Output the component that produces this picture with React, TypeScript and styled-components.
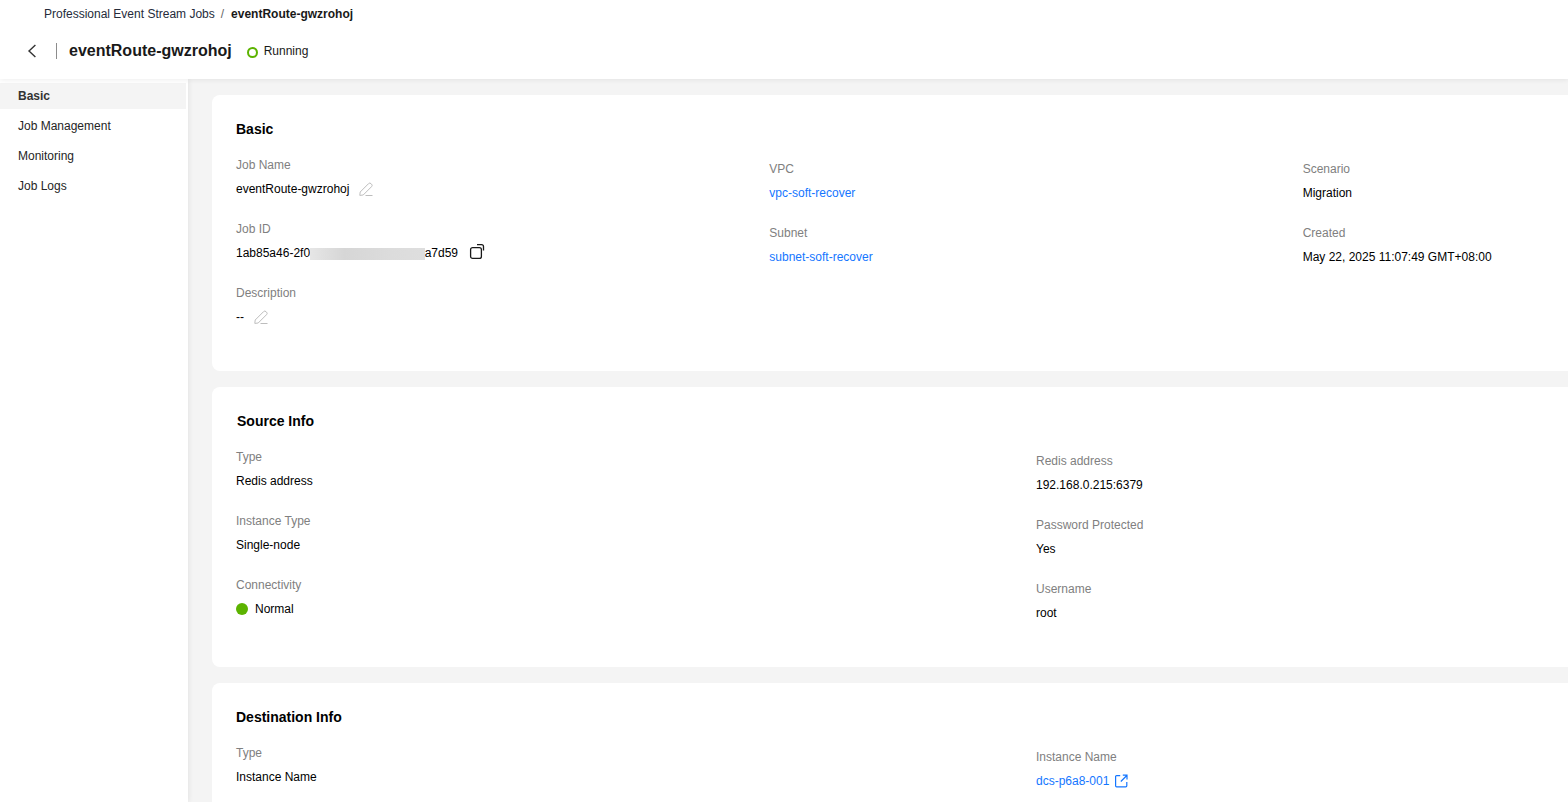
import React from "react";
import styled, { createGlobalStyle } from "styled-components";

const Global = createGlobalStyle`
  html, body { margin: 0; padding: 0; height: 100%; overflow: hidden; }
  body { font-family: "Liberation Sans", Arial, sans-serif; font-size: 12px; color: #000; background: #fff; }
  #root { height: 100%; }
`;

const Page = styled.div`
  width: 1568px;
  height: 802px;
  display: flex;
  flex-direction: column;
  overflow: hidden;
`;
const Header = styled.header`
  height: 79px;
  flex: none;
  background: #fff;
  box-shadow: 0 1px 5px rgba(0, 0, 0, 0.07);
  position: relative;
  z-index: 2;
`;
const Crumbs = styled.nav`
  height: 28px;
  padding-left: 44px;
  display: flex;
  align-items: center;
  color: #252b3a;
`;
const CrumbCurrent = styled.span`
  font-weight: 700;
  color: #191919;
`;
const CrumbSep = styled.span`
  color: #666;
  margin: 0 7px 0 6px;
`;
const TitleRow = styled.div`
  height: 46px;
  display: flex;
  align-items: center;
  padding-left: 26px;
`;
const BackIcon = styled.svg`
  width: 14px;
  height: 16px;
  flex: none;
`;
const Divider = styled.span`
  width: 1px;
  height: 16px;
  background: #8c8c8c;
  margin: 0 12px 0 16px;
`;
const JobTitle = styled.h1`
  margin: 0;
  font-size: 16px;
  line-height: 24px;
  font-weight: 700;
  color: #191919;
`;
const StatusRing = styled.span`
  width: 11px;
  height: 11px;
  box-sizing: border-box;
  border: 2.5px solid #5cb300;
  border-radius: 50%;
  margin: 2px 6px 0 15px;
`;
const StatusText = styled.span`
  color: #191919;
`;
const Body = styled.div`
  flex: 1;
  display: flex;
  min-height: 0;
`;
const Sidebar = styled.aside`
  width: 188px;
  flex: none;
  background: #fff;
  padding-top: 4px;
  box-shadow: 1px 0 5px rgba(0, 0, 0, 0.07);
  position: relative;
  z-index: 1;
`;
const NavItem = styled.div<{ $active?: boolean }>`
  height: 26px;
  width: 186px;
  margin-bottom: 4px;
  padding-left: 18px;
  box-sizing: border-box;
  display: flex;
  align-items: center;
  font-weight: ${(p) => (p.$active ? 700 : 400)};
  background: ${(p) => (p.$active ? "#f4f4f4" : "transparent")};
  color: ${(p) => (p.$active ? "#333" : "#252525")};
`;
const Main = styled.main`
  flex: 1;
  min-width: 0;
  background: #f4f4f4;
  padding: 16px 0 0 24px;
  overflow: hidden;
  display: flex;
  flex-direction: column;
  gap: 16px;
`;
const Card = styled.section`
  flex: none;
  width: 1650px;
  background: #fff;
  border-radius: 8px;
  padding: 24px 24px 46px;
  box-sizing: border-box;
`;
const CardTitle = styled.h2<{ $indent?: number }>`
  margin: 0 0 18px;
  padding-left: ${(p) => p.$indent ?? 0}px;
  font-size: 14px;
  line-height: 20px;
  font-weight: 700;
  color: #000;
`;
const Columns = styled.div<{ $count: number }>`
  display: grid;
  width: 1600px;
  grid-template-columns: repeat(${(p) => p.$count}, 1fr);
`;
const Column = styled.div<{ $offset?: boolean }>`
  display: flex;
  flex-direction: column;
  gap: 24px;
  padding-top: ${(p) => (p.$offset ? "4px" : "0")};
`;
const Field = styled.div`
  display: flex;
  flex-direction: column;
  gap: 8px;
`;
const Label = styled.div`
  line-height: 16px;
  color: #808080;
`;
const Value = styled.div`
  line-height: 16px;
  color: #000;
  display: flex;
  align-items: center;
`;
const LinkText = styled.span`
  color: #1476ff;
`;
const EditIcon = styled.svg`
  width: 15px;
  height: 16px;
  margin-left: 9.5px;
  flex: none;
`;
const Masked = styled.span`
  display: inline-block;
  width: 114.6px;
  height: 12px;
  margin-top: 1px;
  background: linear-gradient(90deg, #e6e6e6, #d6d6d6 30%, #dcdcdc 70%, #dedede);
  filter: blur(0.6px);
`;
const CopyIcon = styled.svg`
  width: 16px;
  height: 16px;
  margin-left: 11px;
  flex: none;
  overflow: visible;
`;
const OpenIcon = styled.svg`
  width: 14px;
  height: 14px;
  margin-left: 5px;
  flex: none;
`;
const Dot = styled.span`
  width: 12px;
  height: 12px;
  border-radius: 50%;
  background: #5cb300;
  margin-right: 7px;
`;

const Edit = () => (
  <EditIcon viewBox="0 0 15 16" fill="none" stroke="#bdbdbd" strokeWidth="1">
    <path d="M1.2 11 9.5 2.7a1.8 1.8 0 0 1 2.6 0l.4.4a1.8 1.8 0 0 1 0 2.6L4.2 14l-3.4.4.4-3.4Z" />
    <path d="M6.5 14.5h7" />
  </EditIcon>
);

const F = ({ label, children }: { label: string; children: React.ReactNode }) => (
  <Field>
    <Label>{label}</Label>
    <Value>{children}</Value>
  </Field>
);

export default function App() {
  return (
    <Page>
      <Global />
      <Header>
        <Crumbs>
          <span>Professional Event Stream Jobs</span>
          <CrumbSep>/</CrumbSep>
          <CrumbCurrent>eventRoute-gwzrohoj</CrumbCurrent>
        </Crumbs>
        <TitleRow>
          <BackIcon viewBox="0 0 14 16" fill="none" stroke="#333" strokeWidth="1.4">
            <path d="M9.4 2 3 8l6.4 6" />
          </BackIcon>
          <Divider />
          <JobTitle>eventRoute-gwzrohoj</JobTitle>
          <StatusRing />
          <StatusText>Running</StatusText>
        </TitleRow>
      </Header>
      <Body>
        <Sidebar>
          <NavItem $active>Basic</NavItem>
          <NavItem>Job Management</NavItem>
          <NavItem>Monitoring</NavItem>
          <NavItem>Job Logs</NavItem>
        </Sidebar>
        <Main>
          <Card>
            <CardTitle>Basic</CardTitle>
            <Columns $count={3}>
              <Column>
                <F label="Job Name">eventRoute-gwzrohoj<Edit /></F>
                <F label="Job ID">
                  1ab85a46-2f0<Masked />a7d59
                  <CopyIcon viewBox="0 0 16 16" fill="none" stroke="#191919" strokeWidth="1.3">
                    <rect x="1.6" y="2.6" width="10.8" height="10.8" rx="2" />
                    <path d="M8 -0.4h4.5a2 2 0 0 1 2 2v4" />
                  </CopyIcon>
                </F>
                <F label="Description">--<Edit /></F>
              </Column>
              <Column $offset>
                <F label="VPC"><LinkText>vpc-soft-recover</LinkText></F>
                <F label="Subnet"><LinkText>subnet-soft-recover</LinkText></F>
              </Column>
              <Column $offset>
                <F label="Scenario">Migration</F>
                <F label="Created">May 22, 2025 11:07:49 GMT+08:00</F>
              </Column>
            </Columns>
          </Card>
          <Card>
            <CardTitle $indent={1}>Source Info</CardTitle>
            <Columns $count={2}>
              <Column>
                <F label="Type">Redis address</F>
                <F label="Instance Type">Single-node</F>
                <F label="Connectivity"><Dot />Normal</F>
              </Column>
              <Column $offset>
                <F label="Redis address">192.168.0.215:6379</F>
                <F label="Password Protected">Yes</F>
                <F label="Username">root</F>
              </Column>
            </Columns>
          </Card>
          <Card>
            <CardTitle>Destination Info</CardTitle>
            <Columns $count={2}>
              <Column>
                <F label="Type">Instance Name</F>
              </Column>
              <Column $offset>
                <F label="Instance Name">
                  <LinkText>dcs-p6a8-001</LinkText>
                  <OpenIcon viewBox="0 0 14 14" fill="none" stroke="#1476ff" strokeWidth="1.2">
                    <path d="M6.2 1.6H2.6a1 1 0 0 0-1 1v9.2a1 1 0 0 0 1 1h9.2a1 1 0 0 0 1-1V8" />
                    <path d="M6.8 7.5 12.8 1.5M8.8 1.2h4.2v4.2" />
                  </OpenIcon>
                </F>
              </Column>
            </Columns>
          </Card>
        </Main>
      </Body>
    </Page>
  );
}
